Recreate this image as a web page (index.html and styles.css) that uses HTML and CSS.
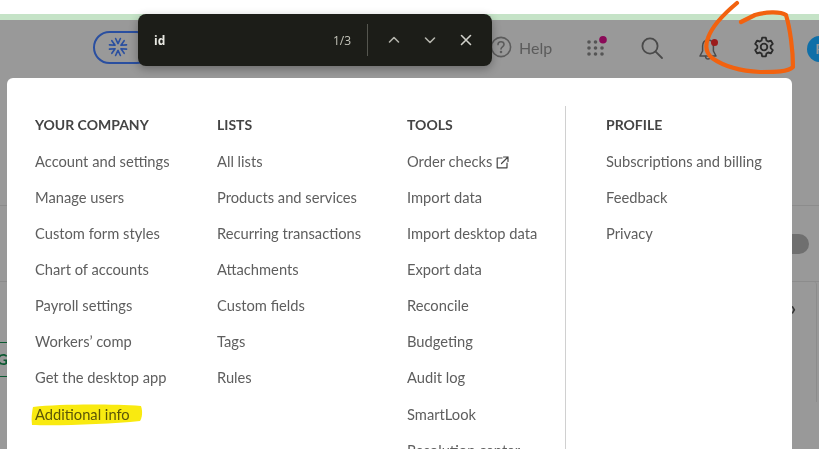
FILE: index.html
```html
<!DOCTYPE html>
<html lang="en">
<head>
    <meta charset="UTF-8">
    <meta name="viewport" content="width=device-width, initial-scale=1.0">
    <title>Settings menu</title>
    <link rel="stylesheet" href="styles.css">
</head>
<body>
    <div class="screen-top"></div>
    <div class="green-strip"></div>

    <div class="app">
        <header class="topbar">
            <div class="logo-pill">
                <svg width="20" height="20" viewBox="0 0 20 20" fill="none" stroke="#2a4fa0" stroke-width="1.6" stroke-linecap="round" stroke-linejoin="round">
                    <path d="M7.6 1.5 10 6.6 12.4 1.5"/>
                    <path d="M7.6 1.5 10 6.6 12.4 1.5" transform="rotate(60 10 10)"/>
                    <path d="M7.6 1.5 10 6.6 12.4 1.5" transform="rotate(120 10 10)"/>
                    <path d="M7.6 1.5 10 6.6 12.4 1.5" transform="rotate(180 10 10)"/>
                    <path d="M7.6 1.5 10 6.6 12.4 1.5" transform="rotate(240 10 10)"/>
                    <path d="M7.6 1.5 10 6.6 12.4 1.5" transform="rotate(300 10 10)"/>
                </svg>
            </div>
            <div class="help">
                <svg width="22" height="22" viewBox="0 0 22 22" fill="none" stroke="#5c5c5c" stroke-width="1.6" stroke-linecap="round">
                    <circle cx="11" cy="11" r="9.6"/>
                    <path d="M8 8.6c0-1.8 1.3-2.8 3-2.8s3 1 3 2.6c0 2.4-3 2.4-3 4.6"/>
                    <circle cx="11" cy="16" r=".5"/>
                </svg>
                <span>Help</span>
            </div>
            <div class="tool tool-apps">
                <svg width="24" height="24" viewBox="0 0 24 24" fill="#555">
                    <circle cx="4" cy="6" r="1.8"/><circle cx="10.5" cy="6" r="1.8"/>
                    <circle cx="4" cy="12" r="1.8"/><circle cx="10.5" cy="12" r="1.8"/><circle cx="17" cy="12" r="1.8"/>
                    <circle cx="4" cy="18" r="1.8"/><circle cx="10.5" cy="18" r="1.8"/><circle cx="17" cy="18" r="1.8"/>
                    <circle cx="18" cy="3.8" r="3.8" fill="#8a0a58"/>
                </svg>
            </div>
            <div class="tool tool-search">
                <svg width="24" height="24" viewBox="0 0 24 24" fill="none" stroke="#4a4a4a" stroke-width="1.8" stroke-linecap="round">
                    <circle cx="10" cy="10" r="7.6"/>
                    <path d="M15.6 15.6 22 22"/>
                </svg>
            </div>
            <div class="tool tool-bell">
                <svg width="24" height="24" viewBox="0 0 24 24" fill="none" stroke="#4a4a4a" stroke-width="1.5" stroke-linecap="round" stroke-linejoin="round">
                    <path d="M12 3c-3.6 0-5.4 2.6-5.4 6v5L4 19h16l-2.6-5V9c0-3.4-1.8-6-5.4-6z"/>
                    <path d="M9.5 19.5c.3 1.8 1.3 2.6 2.5 2.6s2.2-.8 2.5-2.6"/>
                    <circle cx="18.5" cy="5.5" r="3.5" fill="#9c1c1c" stroke="none"/>
                </svg>
            </div>
            <div class="tool tool-gear">
                <svg width="22" height="22" viewBox="0 0 24 24" fill="none" stroke="#2b2b2b" stroke-width="2" stroke-linejoin="round">
                    <circle cx="12" cy="12" r="3.6"/>
                    <path d="M10 1.8h4l.7 3.1 1.9 1.1 3-.9 2 3.5-2.3 2.2v2.4l2.3 2.2-2 3.5-3-.9-1.9 1.1-.7 3.1h-4l-.7-3.1-1.9-1.1-3 .9-2-3.5 2.3-2.2v-2.4L2.4 8.6l2-3.5 3 .9 1.9-1.1z"/>
                </svg>
            </div>
            <div class="avatar">R</div>
        </header>

        <div class="backdrop">
            <div class="backdrop-row row-first"></div>
            <div class="backdrop-row row-pill"><span class="toggle"></span></div>
            <div class="backdrop-card">
                <span class="green-tag">G</span>
                <span class="chevron">›</span>
            </div>
        </div>
    </div>

    <div class="find-bar">
        <span class="find-text">id</span>
        <span class="find-count">1/3</span>
        <span class="find-divider"></span>
        <svg width="12" height="8" viewBox="0 0 12 8" fill="none" stroke="#b4b4ac" stroke-width="1.6" stroke-linecap="round" stroke-linejoin="round"><path d="M1.5 6 6 1.5 10.5 6"/></svg>
        <svg width="12" height="8" viewBox="0 0 12 8" fill="none" stroke="#b4b4ac" stroke-width="1.6" stroke-linecap="round" stroke-linejoin="round"><path d="M1.5 2 6 6.5 10.5 2"/></svg>
        <svg width="12" height="12" viewBox="0 0 12 12" fill="none" stroke="#d0d0ca" stroke-width="1.6" stroke-linecap="round"><path d="M1.5 1.5l9 9M10.5 1.5l-9 9"/></svg>
    </div>

    <nav class="menu">
        <div class="menu-col col-company">
            <h2>YOUR COMPANY</h2>
            <a>Account and settings</a>
            <a>Manage users</a>
            <a>Custom form styles</a>
            <a>Chart of accounts</a>
            <a>Payroll settings</a>
            <a>Workers’ comp</a>
            <a>Get the desktop app</a>
            <a>Additional info</a>
        </div>
        <div class="menu-col col-lists">
            <h2>LISTS</h2>
            <a>All lists</a>
            <a>Products and services</a>
            <a>Recurring transactions</a>
            <a>Attachments</a>
            <a>Custom fields</a>
            <a>Tags</a>
            <a>Rules</a>
        </div>
        <div class="menu-col col-tools">
            <h2>TOOLS</h2>
            <a>Order checks
                <svg class="ext" width="13" height="13" viewBox="0 0 13 13" fill="none" stroke="#444" stroke-width="1.2" stroke-linecap="round" stroke-linejoin="round">
                    <path d="M6 2H1.2v9.8H11V7M7.5 1H12v4.5M12 1 5.5 7.5"/>
                </svg>
            </a>
            <a>Import data</a>
            <a>Import desktop data</a>
            <a>Export data</a>
            <a>Reconcile</a>
            <a>Budgeting</a>
            <a>Audit log</a>
            <a>SmartLook</a>
            <a>Resolution center</a>
        </div>
        <div class="menu-col col-profile">
            <h2>PROFILE</h2>
            <a>Subscriptions and billing</a>
            <a>Feedback</a>
            <a>Privacy</a>
        </div>
    </nav>

    <!-- hand drawn marks on the screenshot -->
    <svg class="marks" width="819" height="449" viewBox="0 0 819 449" fill="none">
        <path class="marker" d="M33 407C60 404 110 404 141 406C143 412 142 418 140 421C110 424 60 426 32 425C31 419 32 412 33 407z" fill="#f9ea10"/>
        <path d="M737 3C725 13 712 26 708 38C705 46 706 53 712 58C722 65 738 71 760 72C775 72 788 72 793 67C793 50 790 28 786 15C780 11 765 12 755 15C749 18 745 20 741 22" stroke="#f2620f" stroke-width="4.2" stroke-linecap="round" stroke-linejoin="round"/>
    </svg>
</body>
</html>
```

FILE: styles.css
```css
html, body {
    height: 449px;
    overflow: hidden;
}
body {
    margin: 0px;
    background-color: #999;
    font-family: "Lato", Arial, sans-serif;
    color: #444;
}
.screen-top {
    height: 14px;
    background-color: #fff;
}
.green-strip {
    height: 6px;
    background-color: #c5e3c7;
}
.topbar {
    height: 58px;
    display: flex;
    align-items: center;
    padding-left: 93px;
    box-sizing: border-box;
}
.logo-pill {
    width: 60px;
    height: 33px;
    margin-top: -4px;
    border: 2px solid #2a4fa0;
    border-radius: 18px;
    box-sizing: border-box;
    padding: 4px 0 0 13px;
    flex-shrink: 0;
}
.help {
    display: flex;
    align-items: center;
    gap: 7px;
    margin-left: 337px;
    margin-top: -4px;
    font-size: 16px;
    color: #5c5c5c;
    width: 95px;
    flex-shrink: 0;
}
.tool {
    width: 24px;
    height: 24px;
    flex-shrink: 0;
}
.tool-apps {
    margin-top: -2px;
}
.tool-search {
    margin-left: 31px;
    margin-top: -2px;
}
.tool-bell {
    margin-left: 32px;
}
.tool-gear {
    margin-left: 33px;
    margin-top: -2px;
}
.avatar {
    width: 26px;
    height: 26px;
    margin-left: 30px;
    border-radius: 50%;
    background-color: #0f6fa8;
    color: #999;
    font-size: 14px;
    font-weight: 700;
    line-height: 26px;
    text-align: center;
    flex-shrink: 0;
}
.backdrop-row {
    border-bottom: 1px solid #8c8c8c;
}
.row-first {
    height: 127px;
}
.row-pill {
    height: 76px;
    display: flex;
    justify-content: flex-end;
    padding-top: 28px;
    box-sizing: border-box;
}
.toggle {
    width: 30px;
    height: 20px;
    margin-right: 10px;
    border-radius: 10px;
    background-color: #6f6f6f;
}
.backdrop-card {
    position: relative;
    height: 120px;
    margin-right: 2px;
    border-right: 1px solid #8c8c8c;
    border-radius: 0 3px 0 0;
}
.green-tag {
    position: absolute;
    left: -22px;
    top: 60px;
    width: 30px;
    height: 35px;
    box-sizing: border-box;
    border-top: 1px solid #0c5a32;
    border-bottom: 1px solid #0c5a32;
    text-align: right;
    color: #0c5a32;
    font-size: 15px;
    font-weight: 700;
    line-height: 33px;
}
.chevron {
    position: absolute;
    right: 20px;
    top: 15px;
    font-size: 18px;
    font-weight: 700;
    color: #333;
}
.find-bar {
    position: absolute;
    left: 138px;
    top: 14px;
    width: 354px;
    height: 52px;
    box-sizing: border-box;
    padding: 0 20px 0 16px;
    display: flex;
    align-items: center;
    background-color: #1c1d18;
    border-radius: 8px;
    box-shadow: 0 3px 10px rgba(0, 0, 0, 0.3);
    color: #e8e8e2;
    font-family: "Open Sans", Arial, sans-serif;
    font-size: 12px;
}
.find-text {
    font-weight: 700;
    flex: 1;
}
.find-count {
    color: #c4c4ba;
    font-size: 12px;
}
.find-divider {
    width: 1px;
    height: 32px;
    margin: 0 20px 0 16px;
    background-color: #55564f;
}
.find-bar svg {
    margin-left: 24px;
}
.find-bar svg:first-of-type {
    margin-left: 0;
}
.menu {
    position: absolute;
    left: 7px;
    top: 78px;
    width: 785px;
    height: 371px;
    overflow: hidden;
    display: flex;
    background-color: #fff;
    border-radius: 6px 6px 0 0;
    box-sizing: border-box;
    padding-top: 28px;
}
.menu-col {
    display: flex;
    flex-direction: column;
    align-items: flex-start;
    flex-shrink: 0;
    box-sizing: border-box;
    height: 380px;
    padding-top: 10px;
}
.menu-col h2 {
    margin: 0 0 18px 0;
    font-size: 14px;
    line-height: 18px;
    font-weight: 700;
    color: #444;
}
.menu-col a {
    height: 36px;
    flex-shrink: 0;
    font-size: 14.7px;
    line-height: 18px;
    color: #5e5e5e;
    white-space: nowrap;
}
.menu-col a:nth-of-type(8) {
    margin-top: 1px;
}
.col-company {
    width: 210px;
    padding-left: 28px;
}
.col-lists {
    width: 190px;
}
.col-tools {
    width: 159px;
    border-right: 1px solid #d0d0d0;
}
.col-profile {
    padding-left: 40px;
}
.ext {
    vertical-align: -2px;
}
.marks {
    position: absolute;
    left: 0;
    top: 0;
    pointer-events: none;
}
.marker {
    mix-blend-mode: multiply;
}
```
